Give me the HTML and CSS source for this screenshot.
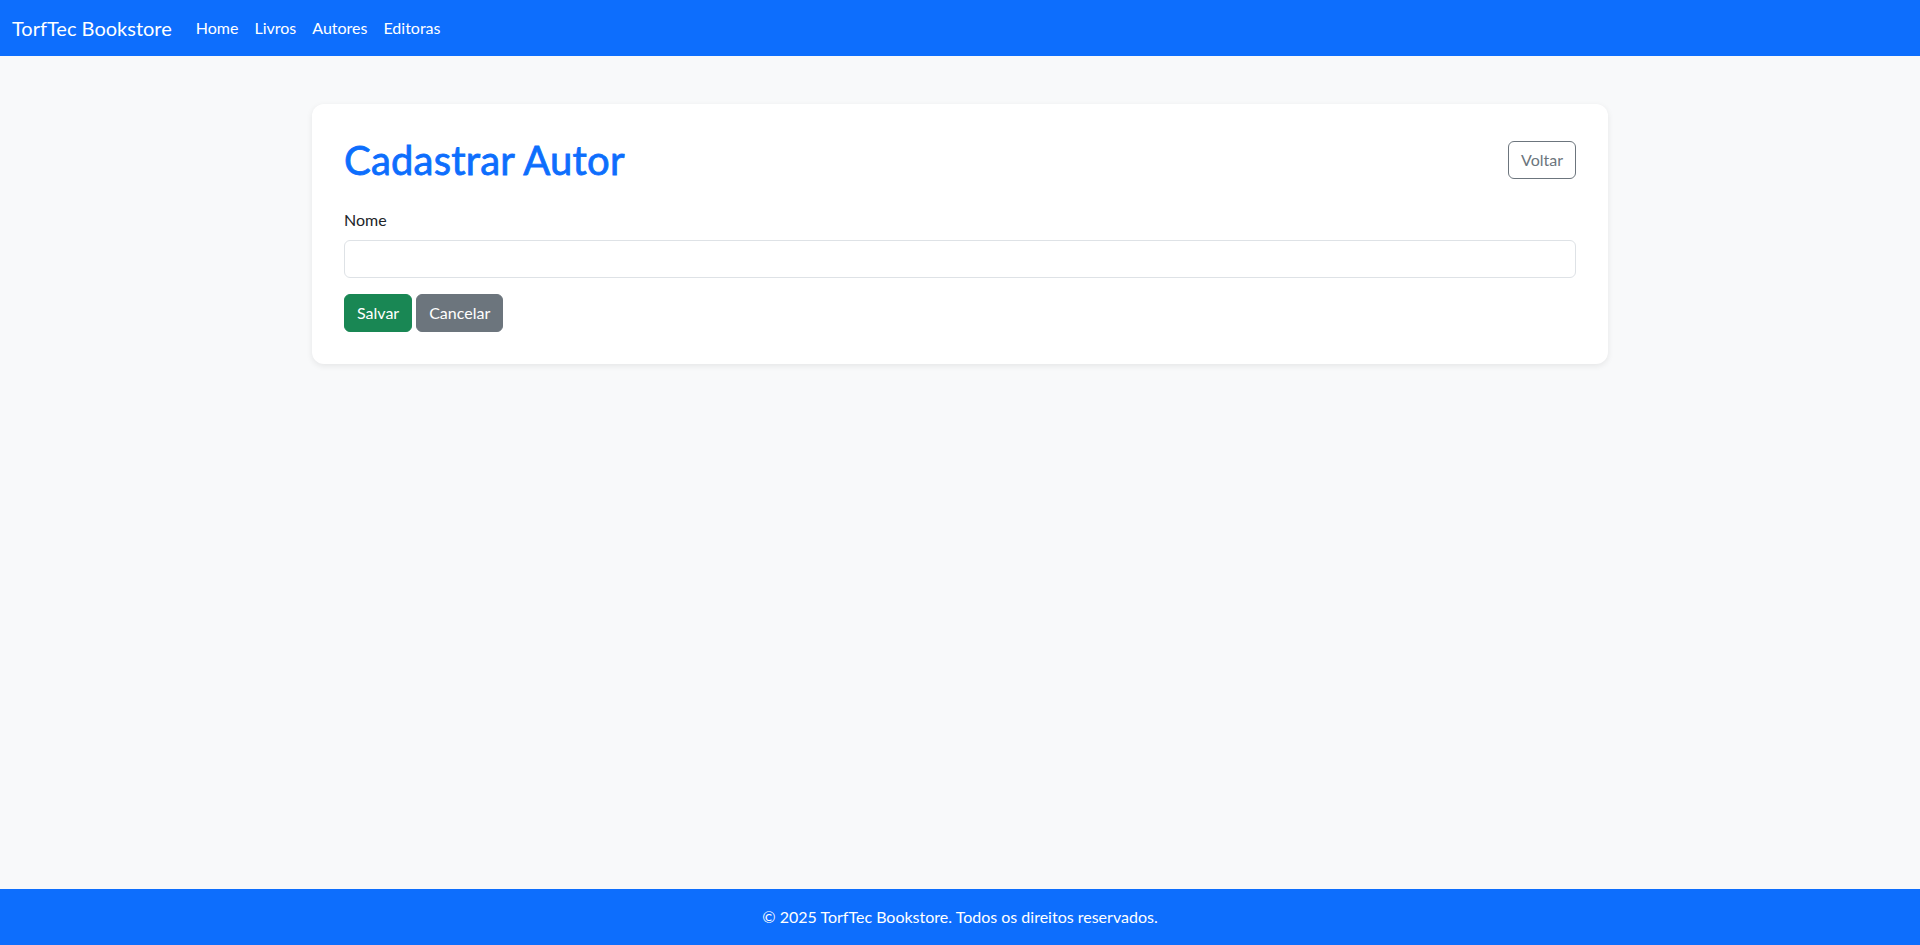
FILE: index.html
```html
<!DOCTYPE html>
<html lang="pt-BR">
<head>
<meta charset="utf-8">
<title>Cadastrar Autor - TorfTec Bookstore</title>
<link rel="stylesheet" href="styles.css">
</head>
<body>
<nav class="navbar">
  <a class="brand" href="#">TorfTec Bookstore</a>
  <ul class="nav">
    <li><a href="#" class="nav-link">Home</a></li>
    <li><a href="#" class="nav-link">Livros</a></li>
    <li><a href="#" class="nav-link">Autores</a></li>
    <li><a href="#" class="nav-link">Editoras</a></li>
  </ul>
</nav>
<main class="container">
  <section class="card">
    <div class="card-header">
      <h1 class="title">Cadastrar Autor</h1>
      <a href="#" class="btn btn-outline">Voltar</a>
    </div>
    <form class="form">
      <div class="field">
        <label for="nome" class="label">Nome</label>
        <input id="nome" type="text" class="input">
      </div>
      <div class="actions">
        <button type="submit" class="btn btn-success">Salvar</button>
        <a href="#" class="btn btn-secondary">Cancelar</a>
      </div>
    </form>
  </section>
</main>
<footer class="footer">© 2025 TorfTec Bookstore. Todos os direitos reservados.</footer>
</body>
</html>
```

FILE: styles.css
```css
* { box-sizing: border-box; }
html, body { margin: 0; padding: 0; }
body {
  font-family: Lato, "Noto Sans", sans-serif;
  font-size: 16px;
  line-height: 1.5;
  color: #212529;
  background: #f8f9fa;
  min-height: 100vh;
  display: flex;
  flex-direction: column;
}
a { text-decoration: none; }

.navbar {
  height: 56px;
  background: #0d6efd;
  display: flex;
  align-items: center;
  padding: 0 12px;
}
.brand {
  color: #fff;
  font-size: 20px;
  line-height: 30px;
  margin-right: 16px;
}
.nav {
  list-style: none;
  margin: 0;
  padding: 0;
  display: flex;
}
.nav-link {
  display: block;
  color: #fff;
  padding: 8px 8px;
  line-height: 24px;
}

.container {
  width: 1320px;
  margin: 48px auto 0;
  padding: 0 12px;
  flex: 0 0 auto;
}
.card {
  background: #fff;
  border-radius: 12px;
  box-shadow: 0 2px 6px rgba(0,0,0,0.08);
  padding: 32px;
}
.card-header {
  display: flex;
  justify-content: space-between;
  align-items: center;
  margin-bottom: 24px;
}
.title {
  margin: 0;
  font-size: 40px;
  line-height: 48px;
  font-weight: 400;
  -webkit-text-stroke: 0.8px #0d6efd;
  letter-spacing: 0.2px;
  color: #0d6efd;
}
.field { margin-bottom: 16px; }
.label {
  display: block;
  margin-bottom: 8px;
  line-height: 24px;
}
.input {
  display: block;
  width: 100%;
  height: 38px;
  padding: 6px 12px;
  font: inherit;
  border: 1px solid #dee2e6;
  border-radius: 6px;
  background: #fff;
}
.actions {
  display: flex;
  gap: 4px;
}
.btn {
  display: inline-block;
  font: inherit;
  line-height: 24px;
  padding: 6px 12px;
  border-radius: 6px;
  border: 1px solid transparent;
  cursor: pointer;
}
.btn-outline {
  color: #6c757d;
  border-color: #6c757d;
  background: transparent;
}
.btn-success {
  background: #198754;
  border-color: #198754;
  color: #fff;
}
.btn-secondary {
  background: #6c757d;
  border-color: #6c757d;
  color: #fff;
}

.footer {
  margin-top: auto;
  background: #0d6efd;
  color: #fff;
  text-align: center;
  padding: 16px 0;
  line-height: 24px;
}
```
